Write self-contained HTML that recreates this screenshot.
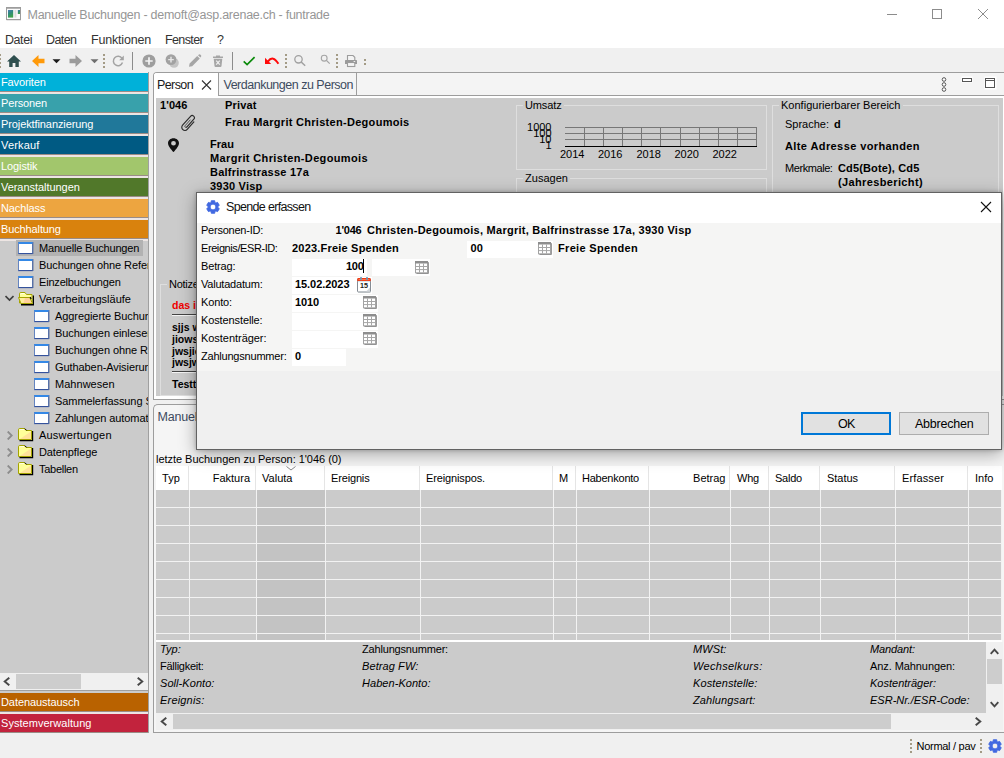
<!DOCTYPE html>
<html lang="de">
<head>
<meta charset="utf-8">
<title>Manuelle Buchungen - demoft@asp.arenae.ch - funtrade</title>
<style>
*{box-sizing:border-box;margin:0;padding:0}
html,body{width:1004px;height:758px;overflow:hidden;background:#f0f0f0}
body{font-family:"Liberation Sans",sans-serif;font-size:11px;color:#000;position:relative}
.a{position:absolute}
.t{position:absolute;white-space:pre;line-height:14px;height:14px;font-size:11px}
.b{font-weight:bold}
.i{font-style:italic}
.nav{position:absolute;left:0;width:148px;height:18px}
.navsh{position:absolute;left:0;width:148px;height:3px;background:#ede5e3;border-top:1px solid #9a8c86}
.wi{position:absolute;width:15px;height:12px;background:#fff;border:1px solid #6484c0;border-top:2px solid #3488e6;border-bottom-color:#34529c;border-right-color:#5872a8;box-shadow:1px 0 0 rgba(110,125,165,.55),0 1px 0 rgba(150,160,190,.4)}
.gb{position:absolute;border:1px solid #dedede}
.gbt{background:#cbcbcb;padding:0 2px}
.fld{position:absolute;background:#fff;height:17px}
.hl{position:absolute;background:#f2f2f2;height:1px}
.vl{position:absolute;background:#f2f2f2;width:1px}
</style>
</head>
<body>
<svg width="0" height="0" style="position:absolute"><defs>
<g id="fclosed"><path d="M14.600 3 V12.600 H1.500" fill="none" stroke="#000" stroke-width="1.200"/><path d="M0.500 11.500 V1.800 Q0.500 0.500 1.800 0.500 H6.500 L8 2.500 H13.500 V11.500 Z" fill="#ffff9a" stroke="#a4a400" stroke-width="1"/><path d="M13 3.500 V11 H2 Z" fill="#ffd89a" opacity="0.750"/><path d="M1.500 2.300 Q1.500 1.500 2.300 1.500 H6" stroke="#ffffe8" stroke-width="1" fill="none"/><path d="M6.800 0.600 L8.600 2.400" stroke="#000" stroke-width="1"/></g>
<g id="fopen"><path d="M15.300 3.500 V12.800 H3" fill="none" stroke="#000" stroke-width="1.400"/><path d="M1.500 11 V1.800 Q1.500 0.500 2.800 0.500 H7 L8.500 2.500 H14 V11 Z" fill="#ffff9a" stroke="#a4a400" stroke-width="1"/><path d="M2.500 2.300 Q2.500 1.500 3.300 1.500 H6.500" stroke="#fffff0" stroke-width="1" fill="none"/><path d="M0.500 5.500 H11.500 L14.500 11.500 H3 Z" fill="#ffef9c" stroke="#a4a400" stroke-width="1"/><path d="M7 6 H11.200 L13.700 11 H5.500 Z" fill="#ffc89a" opacity="0.800"/><path d="M12 5.200 L13.200 6.800" stroke="#000" stroke-width="1.200"/></g>
<g id="tbl"><path d="M13.400 1.200V12.500H1.400" stroke="#8e8e8e" stroke-width="1" fill="none"/><rect x="0.500" y="0.500" width="12" height="11.300" fill="#fff" stroke="#a2a2a2"/><rect x="0" y="0" width="13" height="2.500" fill="#8e8e8e"/><path d="M1 5.500H12.500M1 8.600H12.500M4.500 2.500V11.500M8.500 2.500V11.500" stroke="#a6a6a6" stroke-width="1" fill="none"/></g>
<g id="gear"><path fill-rule="evenodd" stroke="#4169e1" stroke-width="0.900" stroke-linejoin="round" d="M5.09 2.49 L5.27 0.74 L8.73 0.74 L8.91 2.49 L9.95 3.09 L11.56 2.37 L13.29 5.37 L11.86 6.40 L11.86 7.60 L13.29 8.63 L11.56 11.63 L9.95 10.91 L8.91 11.51 L8.73 13.26 L5.27 13.26 L5.09 11.51 L4.05 10.91 L2.44 11.63 L0.71 8.63 L2.14 7.60 L2.14 6.40 L0.71 5.37 L2.44 2.37 L4.05 3.09 Z M9.90 7.00 A2.9 2.9 0 1 0 4.10 7.00 A2.9 2.9 0 1 0 9.90 7.00 Z"/></g>
</defs></svg>

<div class="a" style="left:0;top:0;width:1004px;height:48px;background:#fff"></div>
<svg class="a" style="left:6px;top:7px" width="16" height="14" viewBox="0 0 16 14"><defs><linearGradient id="ig" x1="0" y1="0" x2="0.4" y2="1"><stop offset="0" stop-color="#4a7ab8"/><stop offset="0.5" stop-color="#2f8a7a"/><stop offset="1" stop-color="#3fa24a"/></linearGradient></defs><rect x="0.500" y="0.500" width="14" height="12" fill="#fbfbfb" stroke="#9c9c9c"/><rect x="1" y="1" width="13" height="1" fill="#b4b4b4"/><rect x="2" y="3" width="5.200" height="7.600" fill="url(#ig)"/><rect x="8.400" y="3" width="2" height="7.600" fill="#dcdcdc"/><rect x="11.800" y="3" width="2.200" height="4" fill="url(#ig)"/><rect x="0.500" y="13" width="14.500" height="0.600" fill="#d8d8d8"/></svg>
<div class="t" style="top:7px;left:27.5px;letter-spacing:-0.263px;font-size:12.5px;line-height:16px;height:16px;color:#969696;">Manuelle Buchungen - demoft@asp.arenae.ch - funtrade</div>
<svg class="a" style="left:887px;top:8px" width="112" height="14" viewBox="0 0 112 14" fill="none" stroke="#8c8c8c" stroke-width="1"><path d="M0 6.500h10"/><rect x="45.500" y="1.500" width="9" height="9"/><path d="M91 1l10 10M101 1l-10 10"/></svg>
<div class="t" style="top:32px;left:5.0px;letter-spacing:-0.438px;font-size:12.5px;line-height:16px;height:16px;color:#333;">Datei</div>
<div class="t" style="top:32px;left:46.0px;letter-spacing:-0.572px;font-size:12.5px;line-height:16px;height:16px;color:#333;">Daten</div>
<div class="t" style="top:32px;left:91.0px;letter-spacing:-0.186px;font-size:12.5px;line-height:16px;height:16px;color:#333;">Funktionen</div>
<div class="t" style="top:32px;left:165.0px;letter-spacing:-0.627px;font-size:12.5px;line-height:16px;height:16px;color:#333;">Fenster</div>
<div class="t" style="top:32px;left:217.0px;letter-spacing:-0.800px;font-size:12.5px;line-height:16px;height:16px;color:#333;">?</div>
<div class="a" style="left:0;top:48px;width:1004px;height:24px;background:#f0f0f0"></div>
<svg class="a" style="left:0;top:48px" width="400" height="24" viewBox="0 48 400 24"><g fill="#a39b86"><rect x="0" y="54" width="1" height="2"/><rect x="0" y="58" width="1" height="2"/><rect x="0" y="62" width="1" height="2"/><rect x="0" y="66" width="1" height="2"/></g>
  <path d="M14 55 L7 61.500 H9.200 V67 H12.600 V63 H15.400 V67 H18.800 V61.500 H21 Z" fill="#2f4f4f"/>
  <path d="M32 61 L38.500 55 V58.800 H44.500 V63.200 H38.500 V67 Z" fill="#ff9a0a"/>
  <path d="M52.500 59.200 H60.500 L56.500 63.300 Z" fill="#1a1a1a"/>
  <path d="M82 61 L75.500 55 V58.800 H69.500 V63.200 H75.500 V67 Z" fill="#9b9b9b"/>
  <path d="M90.500 59.200 H98.500 L94.500 63.300 Z" fill="#6e6e6e"/><g fill="#a39b86"><rect x="103" y="54" width="2" height="2"/><rect x="103" y="58" width="2" height="2"/><rect x="103" y="62" width="2" height="2"/><rect x="103" y="66" width="2" height="2"/></g>
  <path d="M122 58.400 A4.700 4.700 0 1 0 122.500 62.600" fill="none" stroke="#a3a3a3" stroke-width="1.500"/>
  <path d="M123.800 55.600 V60.200 H119.200 Z" fill="#a3a3a3"/>
  <rect x="132" y="52" width="1" height="18" fill="#8c8c8c"/>
  <circle cx="149" cy="61" r="6.600" fill="#9e9e9e"/>
  <path d="M145.300 61 H152.700 M149 57.300 V64.700" stroke="#f4f4f4" stroke-width="1.700"/>
  <circle cx="174" cy="63" r="4.800" fill="#c4c4c4"/>
  <circle cx="171" cy="59.600" r="5.400" fill="#a2a2a2"/>
  <path d="M168.200 59.600 H173.800 M171 56.800 V62.400" stroke="#e8e8e8" stroke-width="1.400"/>
  <path d="M189 66.800 L189.600 63.600 L197.200 56 L199.800 58.600 L192.200 66.200 Z M198 55.200 L199 54.400 Q199.800 54 200.500 54.700 L201 55.200 Q201.600 56 201 56.800 L200.400 57.600 Z" fill="#a6a6a6"/>
  <path d="M213 56.600 H223 V58 H213 Z M216 55.400 H220 V56.600 H216 Z M213.700 58.800 H222.300 L221.500 66.100 Q221.400 67 220.500 67 H215.500 Q214.600 67 214.500 66.100 Z" fill="#a6a6a6"/>
  <path d="M216.200 60.600 L219.800 64.600 M219.800 60.600 L216.200 64.600" stroke="#f0f0f0" stroke-width="1.200"/>
  <rect x="232" y="52" width="1" height="18" fill="#8c8c8c"/>
  <path d="M243.700 61.400 L247.100 64.600 L254.600 57.200" fill="none" stroke="#0a8a0a" stroke-width="1.700"/>
  <path d="M265 57.800 V64 H271.200 Z" fill="#ff0a0a"/>
  <path d="M267.800 61.600 Q273 54.600 278.400 63.800" fill="none" stroke="#ff0a0a" stroke-width="2"/><g fill="#a39b86"><rect x="285" y="54" width="2" height="2"/><rect x="285" y="58" width="2" height="2"/><rect x="285" y="62" width="2" height="2"/><rect x="285" y="66" width="2" height="2"/></g>
  <circle cx="298.500" cy="59.300" r="3.700" fill="none" stroke="#a0a0a0" stroke-width="1.300"/>
  <path d="M301.200 62 L305.200 65.800" stroke="#a0a0a0" stroke-width="1.500"/>
  <circle cx="324.200" cy="58.200" r="2.900" fill="none" stroke="#a4a4a4" stroke-width="1.100"/>
  <path d="M326.400 60.400 L329.700 63.600" stroke="#a4a4a4" stroke-width="1.300"/><g fill="#a39b86"><rect x="336" y="54" width="2" height="2"/><rect x="336" y="58" width="2" height="2"/><rect x="336" y="62" width="2" height="2"/><rect x="336" y="66" width="2" height="2"/></g>
  <path d="M347.500 60 V55.500 H353 L354.800 57.300 V60" fill="#f4f4f4" stroke="#9c9c9c" stroke-width="1.100"/>
  <path d="M345.600 60 H356.400 Q357 60 357 60.600 V64 H345 V60.600 Q345 60 345.600 60 Z" fill="#9a9a9a"/>
  <rect x="347.500" y="62.500" width="7.300" height="4" fill="#f4f4f4" stroke="#9c9c9c" stroke-width="1.100"/>
  <rect x="353.600" y="61" width="1.600" height="1" fill="#eee"/>
  <rect x="364" y="59" width="2" height="2" fill="#a39b86"/><rect x="364" y="63" width="2" height="2" fill="#a39b86"/>
</svg>
<div class="a" style="left:0;top:72px;width:149px;height:663px;background:#cbcbcb"></div>
<div class="a" style="left:0;top:72px;width:149px;height:1px;background:#f4ecec"></div>
<div class="nav" style="top:73px;background:#00b1d9"></div><div class="navsh" style="top:91px"></div>
<div class="t" style="top:75px;left:1.0px;letter-spacing:-0.118px;color:#fff;">Favoriten</div>
<div class="nav" style="top:94px;background:#38a1ab"></div><div class="navsh" style="top:112px"></div>
<div class="t" style="top:96px;left:1.0px;letter-spacing:-0.137px;color:#fff;">Personen</div>
<div class="nav" style="top:115px;background:#20789a"></div><div class="navsh" style="top:133px"></div>
<div class="t" style="top:117px;left:1.0px;letter-spacing:-0.099px;color:#fff;">Projektfinanzierung</div>
<div class="nav" style="top:136px;background:#005a83"></div><div class="navsh" style="top:154px"></div>
<div class="t" style="top:138px;left:1.0px;letter-spacing:0.155px;color:#fff;">Verkauf</div>
<div class="nav" style="top:157px;background:#a2c66c"></div><div class="navsh" style="top:175px"></div>
<div class="t" style="top:159px;left:1.0px;letter-spacing:-0.100px;color:#fff;">Logistik</div>
<div class="nav" style="top:178px;background:#51782a"></div><div class="navsh" style="top:196px"></div>
<div class="t" style="top:180px;left:1.0px;letter-spacing:-0.048px;color:#fff;">Veranstaltungen</div>
<div class="nav" style="top:199px;background:#eda540"></div><div class="navsh" style="top:217px"></div>
<div class="t" style="top:201px;left:1.0px;letter-spacing:-0.119px;color:#fff;">Nachlass</div>
<div class="nav" style="top:220px;background:#d9820d"></div><div class="navsh" style="top:238px"></div>
<div class="t" style="top:222px;left:1.0px;letter-spacing:-0.125px;color:#fff;">Buchhaltung</div>
<div class="nav" style="top:693px;background:#b96200"></div><div class="navsh" style="top:711px"></div>
<div class="t" style="top:695px;left:1.0px;letter-spacing:-0.071px;color:#fff;">Datenaustausch</div>
<div class="nav" style="top:714px;background:#c2233d"></div><div class="navsh" style="top:732px"></div>
<div class="t" style="top:716px;left:1.0px;letter-spacing:0.039px;color:#fff;">Systemverwaltung</div>
<div class="a" style="left:0;top:0;width:148px;height:758px;overflow:hidden">
<div class="a" style="left:16px;top:240px;width:127px;height:16px;background:#b2b2b2"></div>
<div class="wi" style="left:18px;top:242px"></div>
<div class="t" style="top:241px;left:39.0px;letter-spacing:-0.176px;">Manuelle Buchungen</div>
<div class="wi" style="left:18px;top:259px"></div>
<div class="t" style="top:258px;left:39.0px;letter-spacing:-0.08px;">Buchungen ohne Referenz</div>
<div class="wi" style="left:18px;top:276px"></div>
<div class="t" style="top:275px;left:39.0px;letter-spacing:-0.187px;">Einzelbuchungen</div>
<svg class="a" style="left:18px;top:292px" width="16" height="14" viewBox="0 0 16 14"><use href="#fopen"/></svg>
<svg class="a" style="left:5px;top:295px" width="9" height="7" viewBox="0 0 9 7"><path d="M0.500 1 L4.500 5 L8.500 1" fill="none" stroke="#404040" stroke-width="1.700"/></svg>
<div class="t" style="top:292px;left:39.0px;letter-spacing:0.015px;">Verarbeitungsläufe</div>
<div class="wi" style="left:34px;top:310px"></div>
<div class="t" style="top:309px;left:55.0px;letter-spacing:-0.08px;">Aggregierte Buchungen</div>
<div class="wi" style="left:34px;top:327px"></div>
<div class="t" style="top:326px;left:55.0px;letter-spacing:-0.08px;">Buchungen einlesen</div>
<div class="wi" style="left:34px;top:344px"></div>
<div class="t" style="top:343px;left:55.0px;letter-spacing:-0.08px;">Buchungen ohne Referenz</div>
<div class="wi" style="left:34px;top:361px"></div>
<div class="t" style="top:360px;left:55.0px;letter-spacing:-0.08px;">Guthaben-Avisierungen</div>
<div class="wi" style="left:34px;top:378px"></div>
<div class="t" style="top:377px;left:55.0px;letter-spacing:0.030px;">Mahnwesen</div>
<div class="wi" style="left:34px;top:395px"></div>
<div class="t" style="top:394px;left:55.0px;letter-spacing:-0.08px;">Sammelerfassung Spenden</div>
<div class="wi" style="left:34px;top:412px"></div>
<div class="t" style="top:411px;left:55.0px;letter-spacing:-0.08px;">Zahlungen automatisch</div>
<svg class="a" style="left:18px;top:428px" width="16" height="14" viewBox="0 0 16 14"><use href="#fclosed"/></svg>
<svg class="a" style="left:7px;top:431px" width="6" height="9" viewBox="0 0 6 9"><path d="M0.700 0.500 L4.700 4.500 L0.700 8.500" fill="none" stroke="#8c8c8c" stroke-width="1.800"/></svg>
<div class="t" style="top:428px;left:39.0px;letter-spacing:0.198px;">Auswertungen</div>
<svg class="a" style="left:18px;top:445px" width="16" height="14" viewBox="0 0 16 14"><use href="#fclosed"/></svg>
<svg class="a" style="left:7px;top:448px" width="6" height="9" viewBox="0 0 6 9"><path d="M0.700 0.500 L4.700 4.500 L0.700 8.500" fill="none" stroke="#8c8c8c" stroke-width="1.800"/></svg>
<div class="t" style="top:445px;left:39.0px;letter-spacing:-0.103px;">Datenpflege</div>
<svg class="a" style="left:18px;top:462px" width="16" height="14" viewBox="0 0 16 14"><use href="#fclosed"/></svg>
<svg class="a" style="left:7px;top:465px" width="6" height="9" viewBox="0 0 6 9"><path d="M0.700 0.500 L4.700 4.500 L0.700 8.500" fill="none" stroke="#8c8c8c" stroke-width="1.800"/></svg>
<div class="t" style="top:462px;left:39.0px;letter-spacing:-0.273px;">Tabellen</div>
</div>
<div class="a" style="left:0;top:673px;width:148px;height:17px;background:#f0f0f0"></div>
<div class="a" style="left:16px;top:674px;width:65px;height:15px;background:#cdcdcd"></div>
<svg class="a" style="left:3px;top:677px" width="8" height="9" viewBox="0 0 8 9"><path d="M6.300 0.700 L1.700 4.500 L6.300 8.300" fill="none" stroke="#484848" stroke-width="1.900"/></svg>
<svg class="a" style="left:136px;top:677px" width="8" height="9" viewBox="0 0 8 9"><path d="M1.700 0.700 L6.300 4.500 L1.700 8.300" fill="none" stroke="#484848" stroke-width="1.900"/></svg>
<div class="a" style="left:0;top:690px;width:148px;height:1px;background:#a0a0a0"></div>
<div class="a" style="left:148px;top:72px;width:1px;height:663px;background:#a0a0a0"></div>
<div class="a" style="left:149px;top:72px;width:4px;height:663px;background:#f0f0f0"></div>

<div class="a" style="left:153px;top:72px;width:851px;height:328px;background:#fff;border:1px solid #9d9d9d;border-right:none;border-radius:4px 0 0 0"></div>
<div class="a" style="left:154px;top:73px;width:850px;height:22px;background:#f4f4f4;border-radius:3px 0 0 0"></div>
<div class="a" style="left:154px;top:95px;width:850px;height:1px;background:#9d9d9d"></div>
<div class="a" style="left:154px;top:73px;width:64px;height:23px;background:#fff;border-radius:3px 0 0 0"></div>
<div class="a" style="left:218px;top:73px;width:1px;height:22px;background:#9d9d9d"></div>
<div class="a" style="left:356px;top:73px;width:1px;height:22px;background:#9d9d9d"></div>
<div class="t" style="top:77px;left:157.0px;letter-spacing:-0.602px;font-size:12.5px;line-height:16px;height:16px;color:#1a1a1a;">Person</div>
<svg class="a" style="left:201px;top:80px" width="11" height="10" viewBox="0 0 11 10"><path d="M1 0.500 L10 9.500 M10 0.500 L1 9.500" stroke="#333" stroke-width="1.100" fill="none"/></svg>
<div class="t" style="top:77px;left:223.5px;letter-spacing:-0.495px;font-size:12.5px;line-height:16px;height:16px;color:#3d4b5f;">Verdankungen zu Person</div>
<svg class="a" style="left:938px;top:74px" width="62" height="20" viewBox="938 74 62 20" fill="#fff" stroke="#555" stroke-width="1">
<circle cx="944" cy="79.500" r="1.800"/><circle cx="944" cy="84.500" r="1.800"/><circle cx="944" cy="89.500" r="1.800"/>
<rect x="961.500" y="76.500" width="11" height="6" fill="#fff" stroke="none"/><rect x="962.500" y="78.500" width="9" height="3"/>
<rect x="984.500" y="76.500" width="12" height="13" fill="#fff" stroke="none"/><rect x="985.500" y="78.500" width="9" height="9"/><path d="M985.500 80.500H994.500"/>
</svg>
<div class="a" style="left:156px;top:98px;width:847px;height:298px;background:#cbcbcb"></div>
<div class="t b" style="top:98px;left:160.0px;letter-spacing:0.081px;">1'046</div>
<div class="t b" style="top:98px;left:225.0px;letter-spacing:0.154px;">Privat</div>
<div class="t b" style="top:115px;left:225.0px;letter-spacing:0.293px;">Frau Margrit Christen-Degoumois</div>
<div class="t b" style="top:137px;left:210.0px;letter-spacing:0.039px;">Frau</div>
<div class="t b" style="top:151px;left:210.0px;letter-spacing:0.365px;">Margrit Christen-Degoumois</div>
<div class="t b" style="top:165px;left:210.0px;letter-spacing:0.234px;">Balfrinstrasse 17a</div>
<div class="t b" style="top:179px;left:210.0px;letter-spacing:0.215px;">3930 Visp</div>
<svg class="a" style="left:180px;top:114px" width="18" height="18" viewBox="0 0 18 18" fill="none" stroke-linecap="round"><path d="M13.86 7.89 L7.22 15.36 A3.1 3.1 0 0 1 2.58 11.24 L10.55 2.28 A2.2 2.2 0 0 1 13.84 5.20 L6.73 13.19" stroke="#2a2a2a" stroke-width="1.150"/><path d="M6.73 13.19 A1.1 1.1 0 0 1 5.09 11.73 L10.20 5.98" stroke="#3a3a3a" stroke-width="0.850"/></svg>
<svg class="a" style="left:166.500px;top:137.800px" width="13" height="14.600" viewBox="0 0 13 16" preserveAspectRatio="none"><path fill-rule="evenodd" d="M6.500 0.300 C3.300 0.300 1 2.700 1 5.700 C1 9.400 6.500 15.400 6.500 15.400 C6.500 15.400 12 9.400 12 5.700 C12 2.700 9.700 0.300 6.500 0.300 Z M6.500 3.300 A2.400 2.400 0 1 1 6.500 8.100 A2.400 2.400 0 1 1 6.500 3.300 Z" fill="#111"/></svg>
<div class="gb" style="left:516px;top:105px;width:251px;height:65px"></div>
<div class="t" style="top:98px;left:525.0px;letter-spacing:-0.130px;background:#cbcbcb;padding:0 2px;margin-left:-2px;">Umsatz</div>
<div class="gb" style="left:516px;top:178px;width:251px;height:40px"></div>
<div class="t" style="top:171px;left:525.0px;letter-spacing:0.027px;background:#cbcbcb;padding:0 2px;margin-left:-2px;">Zusagen</div>
<svg class="a" style="left:520px;top:118px" width="245" height="46" viewBox="520 118 245 46"><path d="M565 127.5H757" stroke="#777" stroke-width="1"/><path d="M565 133.5H757" stroke="#777" stroke-width="1"/><path d="M565 139.5H757" stroke="#777" stroke-width="1"/><path d="M584.5 127V146" stroke="#777" stroke-width="1"/><path d="M603.5 127V146" stroke="#777" stroke-width="1"/><path d="M622.5 127V146" stroke="#777" stroke-width="1"/><path d="M641.5 127V146" stroke="#777" stroke-width="1"/><path d="M660.5 127V146" stroke="#777" stroke-width="1"/><path d="M680.5 127V146" stroke="#777" stroke-width="1"/><path d="M699.5 127V146" stroke="#777" stroke-width="1"/><path d="M718.5 127V146" stroke="#777" stroke-width="1"/><path d="M737.5 127V146" stroke="#777" stroke-width="1"/><path d="M756.5 127V146" stroke="#777" stroke-width="1"/><path d="M565 146.500H757" stroke="#000" stroke-width="1"/></svg>
<div class="t" style="top:120px;right:452.5px;">1000</div>
<div class="t" style="top:126px;right:452.5px;">100</div>
<div class="t" style="top:132px;right:452.5px;">10</div>
<div class="t" style="top:138px;right:452.5px;">1</div>
<div class="t" style="top:147px;left:560.0px;">2014</div>
<div class="t" style="top:147px;left:598.0px;">2016</div>
<div class="t" style="top:147px;left:636.5px;">2018</div>
<div class="t" style="top:147px;left:674.5px;">2020</div>
<div class="t" style="top:147px;left:712.5px;">2022</div>
<div class="gb" style="left:772px;top:105px;width:227px;height:120px"></div>
<div class="t" style="top:98px;left:781.0px;letter-spacing:0.011px;background:#cbcbcb;padding:0 2px;margin-left:-2px;">Konfigurierbarer Bereich</div>
<div class="t" style="top:117px;left:785.0px;">Sprache:</div>
<div class="t b" style="top:117px;left:834.0px;letter-spacing:0.766px;">d</div>
<div class="t b" style="top:139px;left:785.0px;letter-spacing:0.403px;">Alte Adresse vorhanden</div>
<div class="t" style="top:161px;left:785.0px;letter-spacing:-0.427px;">Merkmale:</div>
<div class="t b" style="top:161px;left:838.0px;letter-spacing:0.146px;">Cd5(Bote), Cd5</div>
<div class="t b" style="top:175px;left:838.0px;letter-spacing:0.368px;">(Jahresbericht)</div>
<div class="gb" style="left:160px;top:284px;width:340px;height:112px"></div>
<div class="t" style="top:277px;left:169.0px;letter-spacing:-0.257px;background:#cbcbcb;padding:0 2px;margin-left:-2px;">Notizen</div>
<div class="t b" style="top:298px;left:172.0px;font-size:10.5px;color:#f00000;">das ist ein Test</div>
<div class="a" style="left:172px;top:314px;width:320px;height:1px;background:#444;box-shadow:0 1px 0 #f4f4f4"></div>
<div class="t b" style="top:320px;left:172.0px;font-size:10.5px;">sjjs wjsiw</div>
<div class="t b" style="top:332px;left:172.0px;font-size:10.5px;">jiowsj</div>
<div class="t b" style="top:344px;left:172.0px;font-size:10.5px;">jwsjiowj</div>
<div class="t b" style="top:355px;left:172.0px;font-size:10.5px;">jwsjwios</div>
<div class="a" style="left:172px;top:371px;width:320px;height:1px;background:#444;box-shadow:0 1px 0 #f4f4f4"></div>
<div class="t b" style="top:377px;left:172.0px;font-size:10.5px;">Testtext</div>
<div class="a" style="left:153px;top:404px;width:851px;height:329px;background:#f5f5f5;border:1px solid #9d9d9d;border-right:none;border-radius:5px 0 0 0"></div>
<div class="t" style="top:409px;left:157.5px;font-size:12.5px;line-height:16px;height:16px;color:#3d4b5f;letter-spacing:-0.2px;">Manuelle Buchungen</div>
<div class="t" style="top:452px;left:156.0px;letter-spacing:-0.035px;">letzte Buchungen zu Person: 1'046 (0)</div>
<div class="a" style="left:156px;top:466px;width:846px;height:24px;background:#fff"></div>
<div class="a" style="left:156px;top:490px;width:846px;height:150px;background:#cbcbcb"></div>
<div class="a" style="left:256px;top:490px;width:69px;height:150px;background:#c3c3c3"></div>
<div class="a" style="left:188px;top:466px;width:1px;height:24px;background:#e5e5e5"></div>
<div class="vl" style="left:189px;top:490px;height:150px"></div>
<div class="a" style="left:255px;top:466px;width:1px;height:24px;background:#e5e5e5"></div>
<div class="vl" style="left:256px;top:490px;height:150px"></div>
<div class="a" style="left:324px;top:466px;width:1px;height:24px;background:#e5e5e5"></div>
<div class="vl" style="left:325px;top:490px;height:150px"></div>
<div class="a" style="left:419px;top:466px;width:1px;height:24px;background:#e5e5e5"></div>
<div class="vl" style="left:420px;top:490px;height:150px"></div>
<div class="a" style="left:552px;top:466px;width:1px;height:24px;background:#e5e5e5"></div>
<div class="vl" style="left:553px;top:490px;height:150px"></div>
<div class="a" style="left:575px;top:466px;width:1px;height:24px;background:#e5e5e5"></div>
<div class="vl" style="left:576px;top:490px;height:150px"></div>
<div class="a" style="left:648px;top:466px;width:1px;height:24px;background:#e5e5e5"></div>
<div class="vl" style="left:649px;top:490px;height:150px"></div>
<div class="a" style="left:729px;top:466px;width:1px;height:24px;background:#e5e5e5"></div>
<div class="vl" style="left:730px;top:490px;height:150px"></div>
<div class="a" style="left:768px;top:466px;width:1px;height:24px;background:#e5e5e5"></div>
<div class="vl" style="left:769px;top:490px;height:150px"></div>
<div class="a" style="left:819px;top:466px;width:1px;height:24px;background:#e5e5e5"></div>
<div class="vl" style="left:820px;top:490px;height:150px"></div>
<div class="a" style="left:894px;top:466px;width:1px;height:24px;background:#e5e5e5"></div>
<div class="vl" style="left:895px;top:490px;height:150px"></div>
<div class="a" style="left:967px;top:466px;width:1px;height:24px;background:#e5e5e5"></div>
<div class="vl" style="left:968px;top:490px;height:150px"></div>
<div class="vl" style="left:1001px;top:490px;height:150px"></div>
<div class="hl" style="left:156px;top:507px;width:846px"></div>
<div class="hl" style="left:156px;top:525px;width:846px"></div>
<div class="hl" style="left:156px;top:543px;width:846px"></div>
<div class="hl" style="left:156px;top:561px;width:846px"></div>
<div class="hl" style="left:156px;top:579px;width:846px"></div>
<div class="hl" style="left:156px;top:597px;width:846px"></div>
<div class="hl" style="left:156px;top:615px;width:846px"></div>
<div class="hl" style="left:156px;top:633px;width:846px"></div>
<div class="a" style="left:156px;top:640px;width:846px;height:2px;background:#fff"></div>
<div class="t" style="top:471px;left:162.0px;letter-spacing:0.089px;">Typ</div>
<div class="t" style="top:471px;right:754.0px;">Faktura</div>
<div class="t" style="top:471px;left:262.0px;letter-spacing:0.021px;">Valuta</div>
<div class="t" style="top:471px;left:331.0px;letter-spacing:-0.156px;">Ereignis</div>
<div class="t" style="top:471px;left:426.0px;letter-spacing:-0.129px;">Ereignispos.</div>
<div class="t" style="top:471px;left:559.0px;letter-spacing:-0.672px;">M</div>
<div class="t" style="top:471px;left:582.0px;letter-spacing:-0.233px;">Habenkonto</div>
<div class="t" style="top:471px;right:278.5px;">Betrag</div>
<div class="t" style="top:471px;left:737.0px;letter-spacing:-0.208px;">Whg</div>
<div class="t" style="top:471px;left:775.0px;letter-spacing:-0.228px;">Saldo</div>
<div class="t" style="top:471px;left:827.0px;letter-spacing:-0.031px;">Status</div>
<div class="t" style="top:471px;left:902.0px;letter-spacing:0.129px;">Erfasser</div>
<div class="t" style="top:471px;left:975.0px;letter-spacing:0.035px;">Info</div>
<svg class="a" style="left:286px;top:466px" width="10" height="5" viewBox="0 0 10 5"><path d="M0.500 0.500 L5 4 L9.500 0.500" fill="none" stroke="#8a8a8a" stroke-width="1"/></svg>
<div class="a" style="left:156px;top:642px;width:830px;height:71px;background:#cbcbcb"></div>
<div class="t i" style="top:642px;left:160.0px;letter-spacing:0.105px;">Typ:</div>
<div class="t" style="top:659px;left:160.0px;letter-spacing:-0.270px;">Fälligkeit:</div>
<div class="t i" style="top:676px;left:160.0px;letter-spacing:0.062px;">Soll-Konto:</div>
<div class="t i" style="top:693px;left:160.0px;letter-spacing:0.189px;">Ereignis:</div>
<div class="t" style="top:642px;left:362.0px;letter-spacing:-0.177px;">Zahlungsnummer:</div>
<div class="t i" style="top:659px;left:362.0px;letter-spacing:0.087px;">Betrag FW:</div>
<div class="t i" style="top:676px;left:362.0px;letter-spacing:0.051px;">Haben-Konto:</div>
<div class="t i" style="top:642px;left:693.0px;letter-spacing:0.100px;">MWSt:</div>
<div class="t i" style="top:659px;left:693.0px;letter-spacing:0.306px;">Wechselkurs:</div>
<div class="t i" style="top:676px;left:693.0px;letter-spacing:0.117px;">Kostenstelle:</div>
<div class="t i" style="top:693px;left:693.0px;letter-spacing:0.112px;">Zahlungsart:</div>
<div class="t i" style="top:642px;left:870.0px;letter-spacing:-0.109px;">Mandant:</div>
<div class="t" style="top:659px;left:870.0px;letter-spacing:-0.082px;">Anz. Mahnungen:</div>
<div class="t i" style="top:676px;left:870.0px;">Kostenträger:</div>
<div class="t i" style="top:693px;left:870.0px;letter-spacing:0.016px;">ESR-Nr./ESR-Code:</div>
<div class="a" style="left:986px;top:642px;width:17px;height:71px;background:#f0f0f0"></div>
<div class="a" style="left:987px;top:659px;width:15px;height:25px;background:#cdcdcd"></div>
<svg class="a" style="left:990px;top:648px" width="9" height="7" viewBox="0 0 9 7"><path d="M0.700 5.800 L4.500 1.700 L8.300 5.800" fill="none" stroke="#484848" stroke-width="1.900"/></svg>
<svg class="a" style="left:990px;top:701px" width="9" height="7" viewBox="0 0 9 7"><path d="M0.700 1.200 L4.500 5.300 L8.300 1.200" fill="none" stroke="#484848" stroke-width="1.900"/></svg>
<div class="a" style="left:156px;top:713px;width:847px;height:17px;background:#f0f0f0"></div>
<div class="a" style="left:173px;top:714px;width:718px;height:15px;background:#cdcdcd"></div>
<svg class="a" style="left:160px;top:717px" width="8" height="9" viewBox="0 0 8 9"><path d="M6.300 0.700 L1.700 4.500 L6.300 8.300" fill="none" stroke="#484848" stroke-width="1.900"/></svg>
<svg class="a" style="left:974px;top:717px" width="8" height="9" viewBox="0 0 8 9"><path d="M1.700 0.700 L6.300 4.500 L1.700 8.300" fill="none" stroke="#484848" stroke-width="1.900"/></svg>
<div class="a" style="left:0;top:733px;width:1004px;height:25px;background:#f0f0f0"></div>
<div class="a" style="left:910px;top:739px;width:2px;height:2px;background:#a39b86"></div><div class="a" style="left:910px;top:743px;width:2px;height:2px;background:#a39b86"></div><div class="a" style="left:910px;top:747px;width:2px;height:2px;background:#a39b86"></div><div class="a" style="left:910px;top:751px;width:2px;height:2px;background:#a39b86"></div>
<div class="a" style="left:980px;top:739px;width:2px;height:2px;background:#a39b86"></div><div class="a" style="left:980px;top:743px;width:2px;height:2px;background:#a39b86"></div><div class="a" style="left:980px;top:747px;width:2px;height:2px;background:#a39b86"></div><div class="a" style="left:980px;top:751px;width:2px;height:2px;background:#a39b86"></div>
<div class="t" style="top:739px;left:916.5px;letter-spacing:-0.280px;">Normal / pav</div>
<svg class="a" style="left:988px;top:739px" width="14" height="14" viewBox="0 0 14 14" fill="#4169e1"><use href="#gear"/></svg>
<div class="a" style="left:196px;top:192px;width:806px;height:258px;background:#f0f0f0;border:1px solid #626262;box-shadow:0 4px 16px rgba(0,0,0,.34),0 0 4px rgba(0,0,0,.22)"></div>
<div class="a" style="left:197px;top:193px;width:804px;height:30px;background:#fff"></div>
<div class="a" style="left:197px;top:223px;width:803px;height:148px;background:#f5f5f4"></div>
<svg class="a" style="left:206px;top:200px" width="14" height="14" viewBox="0 0 14 14" fill="#4169e1"><use href="#gear"/></svg>
<div class="t" style="top:199px;left:226.0px;letter-spacing:-0.668px;font-size:12.5px;line-height:16px;height:16px;color:#111;">Spende erfassen</div>
<svg class="a" style="left:980px;top:201px" width="12" height="12" viewBox="0 0 12 12"><path d="M1 1 L11 11 M11 1 L1 11" stroke="#111" stroke-width="1.100" fill="none"/></svg>
<div class="t" style="top:223px;left:201.0px;letter-spacing:-0.234px;">Personen-ID:</div>
<div class="t" style="top:241px;left:201.0px;letter-spacing:-0.415px;">Ereignis/ESR-ID:</div>
<div class="t" style="top:259px;left:201.0px;letter-spacing:-0.138px;">Betrag:</div>
<div class="t" style="top:277px;left:201.0px;letter-spacing:-0.210px;">Valutadatum:</div>
<div class="t" style="top:295px;left:201.0px;letter-spacing:-0.135px;">Konto:</div>
<div class="t" style="top:313px;left:201.0px;letter-spacing:-0.114px;">Kostenstelle:</div>
<div class="t" style="top:331px;left:201.0px;letter-spacing:-0.042px;">Kostenträger:</div>
<div class="t" style="top:349px;left:201.0px;letter-spacing:-0.210px;">Zahlungsnummer:</div>
<div class="t b" style="top:223px;left:335.5px;letter-spacing:-0.219px;">1'046</div>
<div class="t b" style="top:223px;left:367.0px;letter-spacing:0.265px;">Christen-Degoumois, Margrit, Balfrinstrasse 17a, 3930 Visp</div>
<div class="t b" style="top:241px;left:292.0px;letter-spacing:0.204px;">2023.Freie Spenden</div>
<div class="fld" style="left:467px;top:241px;width:86px"></div>
<div class="t b" style="top:241px;left:470.5px;letter-spacing:0.125px;">00</div>
<svg class="a" style="left:538px;top:242px" width="15" height="14" viewBox="0 0 15 14"><use href="#tbl"/></svg>
<div class="t b" style="top:241px;left:558.0px;letter-spacing:0.323px;">Freie Spenden</div>
<div class="fld" style="left:292px;top:259px;width:75px"></div>
<div class="fld" style="left:372px;top:259px;width:58px"></div>
<div class="t b" style="top:259px;left:346.0px;letter-spacing:-0.286px;">100</div>
<div class="a" style="left:363px;top:259px;width:1px;height:14px;background:#000"></div>
<svg class="a" style="left:415px;top:260.500px" width="15" height="14" viewBox="0 0 15 14"><use href="#tbl"/></svg>
<div class="fld" style="left:292px;top:277px;width:80px"></div>
<div class="t b" style="top:277px;left:295.0px;letter-spacing:-0.056px;">15.02.2023</div>
<svg class="a" style="left:357px;top:277px" width="15" height="16" viewBox="0 0 15 16"><rect x="0.500" y="1.500" width="13" height="13.500" rx="1" fill="#fff" stroke="#858c94"/><path d="M0.300 2.200 Q0.300 1 1.500 1 H12.500 Q13.700 1 13.700 2.200 V4.200 H0.300 Z" fill="#f23a10"/><path d="M1.500 2.600 H12.500" stroke="#ff8a6a" stroke-width="0.800"/><rect x="0.800" y="4.200" width="12.400" height="0.900" fill="#cfeaf4"/><rect x="3.200" y="0" width="1.600" height="3.200" fill="#6a9ab8"/><rect x="9.200" y="0" width="1.600" height="3.200" fill="#6a9ab8"/><text x="7.100" y="10.800" font-family="Liberation Sans, sans-serif" font-size="7.200" font-weight="bold" text-anchor="middle" fill="#222">15</text><path d="M9 14.500 L13 10.500 V14.500 Z" fill="#d4d8dc"/><path d="M1 15.300 H13.500" stroke="#b8bcc0" stroke-width="0.800"/></svg>
<div class="fld" style="left:292px;top:295px;width:86px"></div>
<div class="t b" style="top:295px;left:295.0px;letter-spacing:-0.121px;">1010</div>
<div class="fld" style="left:292px;top:313px;width:86px"></div>
<div class="fld" style="left:292px;top:331px;width:86px"></div>
<svg class="a" style="left:363px;top:296px" width="15" height="14" viewBox="0 0 15 14"><use href="#tbl"/></svg>
<svg class="a" style="left:363px;top:314px" width="15" height="14" viewBox="0 0 15 14"><use href="#tbl"/></svg>
<svg class="a" style="left:363px;top:332px" width="15" height="14" viewBox="0 0 15 14"><use href="#tbl"/></svg>
<div class="fld" style="left:292px;top:349px;width:54px"></div>
<div class="t b" style="top:349px;left:295.0px;letter-spacing:0.375px;">0</div>
<div class="a" style="left:801px;top:412px;width:90px;height:23px;background:#e1e1e1;border:2px solid #0078d7"></div>
<div class="a" style="left:899px;top:412px;width:90px;height:23px;background:#e1e1e1;border:1px solid #adadad"></div>
<div class="t" style="top:416px;left:838.0px;letter-spacing:-0.781px;font-size:12.5px;line-height:16px;height:16px;">OK</div>
<div class="t" style="top:416px;left:915.0px;letter-spacing:-0.219px;font-size:12.5px;line-height:16px;height:16px;">Abbrechen</div>
</body>
</html>
